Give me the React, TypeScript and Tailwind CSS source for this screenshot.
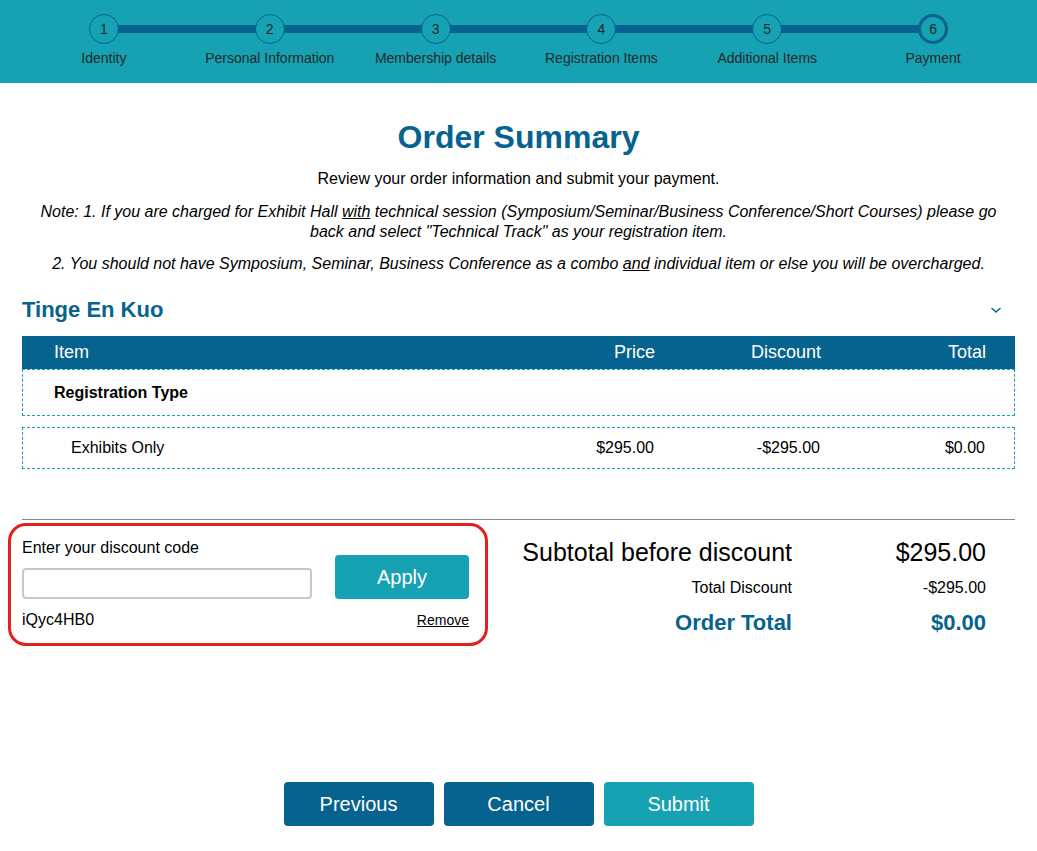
import { useState } from "react";

const steps = [
  "Identity",
  "Personal Information",
  "Membership details",
  "Registration Items",
  "Additional Items",
  "Payment",
];

const font = { fontFamily: '"Liberation Sans", Arial, sans-serif' };

function Stepper({ current }: { current: number }) {
  return (
    <div className="h-[83px] bg-[#17a2b3] pt-[14px]">
      <div className="relative mx-[21px] grid grid-cols-6">
        <div className="absolute top-[11px] left-[8.333%] right-[8.333%] h-[8px] bg-[#06628e]" />
        {steps.map((label, i) => {
          const active = i + 1 === current;
          return (
            <div key={label} className="relative flex flex-col items-center">
              <div
                className={`flex h-[30px] w-[30px] items-center justify-center rounded-full bg-[#17a2b3] text-[14px] text-[#1c2a2a] ${
                  active ? "border-[3px] border-[#06628e]" : "border border-[#06628e]"
                }`}
              >
                {i + 1}
              </div>
              <div className="mt-[5px] text-[14px] leading-[18px] text-[#1c2a2a]">{label}</div>
            </div>
          );
        })}
      </div>
    </div>
  );
}

export default function App() {
  const [code, setCode] = useState("");

  return (
    <div className="min-h-[851px] bg-white text-black" style={font}>
      <Stepper current={6} />

      <div className="mx-[22px] text-center">
        <h1 className="mt-[36px] text-[32px] font-bold leading-[36px] text-[#06628e]">Order Summary</h1>
        <p className="mt-[14px] text-[16px] leading-[20px]">Review your order information and submit your payment.</p>
        <p className="mt-[13px] text-[16px] italic leading-[20px]">
          Note: 1. If you are charged for Exhibit Hall <u>with</u> technical session
          (Symposium/Seminar/Business Conference/Short Courses) please go back and select "Technical Track" as
          your registration item.
        </p>
        <p className="mt-[12px] text-[16px] italic leading-[20px]">
          2. You should not have Symposium, Seminar, Business Conference as a combo <u>and</u> individual item or
          else you will be overcharged.
        </p>
      </div>

      <div className="mx-[22px]">
        <div className="mt-[22px] flex items-center justify-between">
          <h2 className="text-[22px] font-bold leading-[28px] text-[#06628e]">Tinge En Kuo</h2>
          <svg width="12" height="8" viewBox="0 0 12 8" className="mr-[13px]">
            <polyline points="1.5,2 6,6 10.5,2" fill="none" stroke="#06628e" strokeWidth="1.4" />
          </svg>
        </div>

        <div className="mt-[12px] grid h-[33px] grid-cols-[1fr_120px_166px_165px] items-center bg-[#06628e] pl-[32px] pr-[29px] text-[18px] text-white">
          <div>Item</div>
          <div className="text-right">Price</div>
          <div className="text-right">Discount</div>
          <div className="text-right">Total</div>
        </div>
        <div className="flex h-[47px] items-center border border-dashed border-[#17a2b3] pt-[1px] pl-[31px] text-[16px] font-bold">
          Registration Type
        </div>
        <div className="mt-[11px] grid h-[42px] grid-cols-[1fr_121px_166px_165px] items-center border border-dashed border-[#17a2b3] pb-[1px] pl-[48px] pr-[29px] text-[16px]">
          <div>Exhibits Only</div>
          <div className="text-right">$295.00</div>
          <div className="text-right">-$295.00</div>
          <div className="text-right">$0.00</div>
        </div>

        <hr className="mt-[50px] border-t border-[#8a8a8a]" />

        <div className="mt-[18px] flex">
          <div className="relative w-[447px]">
            <div className="pointer-events-none absolute -top-[15px] -bottom-[9px] -left-[14px] -right-[19px] rounded-[18px] border-[3px] border-[#e3201b]" />
            <div className="flex">
              <div className="w-[290px]">
                <label className="block text-[16px] leading-[20px]">Enter your discount code</label>
                <input
                  value={code}
                  onChange={(e) => setCode(e.target.value)}
                  className="mt-[10px] block h-[31px] w-[290px] rounded-[4px] border-2 border-[#c8c8c8] px-2 text-[16px] outline-none"
                />
              </div>
              <button
                type="button"
                className="mt-[17px] ml-[23px] h-[44px] w-[134px] rounded-[4px] bg-[#17a2b3] text-[20px] text-white"
              >
                Apply
              </button>
            </div>
            <div className="mt-[11px] flex items-center justify-between text-[16px] leading-[20px]">
              <span>iQyc4HB0</span>
              <button type="button" className="text-[14px] underline">
                Remove
              </button>
            </div>
          </div>

          <div className="ml-[48px] flex-1 pr-[29px]">
            <div className="grid grid-cols-[1fr_194px] items-center text-right">
              <div className="text-[25px] leading-[28px]">Subtotal before discount</div>
              <div className="text-[25px] leading-[28px]">$295.00</div>
              <div className="mt-[12px] text-[16px] leading-[20px]">Total Discount</div>
              <div className="mt-[12px] text-[16px] leading-[20px]">-$295.00</div>
              <div className="mt-[11px] text-[22px] font-bold leading-[28px] text-[#06628e]">Order Total</div>
              <div className="mt-[11px] text-[22px] font-bold leading-[28px] text-[#06628e]">$0.00</div>
            </div>
          </div>
        </div>

        <div className="mt-[145px] flex justify-center gap-[10px]">
          <button type="button" className="h-[44px] w-[150px] rounded-[4px] bg-[#06628e] text-[20px] text-white">
            Previous
          </button>
          <button type="button" className="h-[44px] w-[150px] rounded-[4px] bg-[#06628e] text-[20px] text-white">
            Cancel
          </button>
          <button type="button" className="h-[44px] w-[150px] rounded-[4px] bg-[#17a2b3] text-[20px] text-white">
            Submit
          </button>
        </div>
      </div>
    </div>
  );
}
